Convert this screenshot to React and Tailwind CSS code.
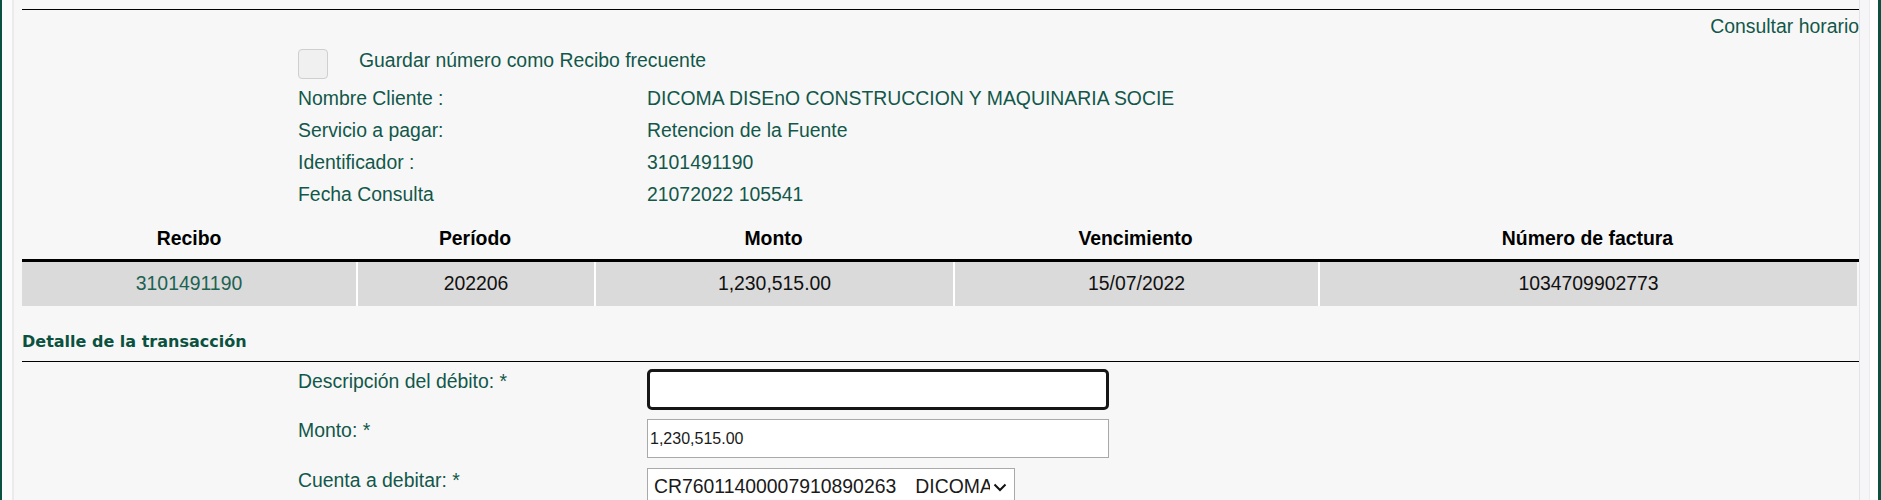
import React from "react";

const green = "text-[#12574a]";

function InfoRow({ label, value }) {
  return (
    <div className="grid grid-cols-[349px_1fr] h-[32px] leading-[32px]">
      <div className={green}>{label}</div>
      <div className={green}>{value}</div>
    </div>
  );
}

export default function App() {
  const cols = "grid grid-cols-[334px_238px_359px_365px_539px]";
  return (
    <div className="h-[500px] w-full overflow-hidden bg-white flex border-l-2 border-r-[3px] border-[#0b5140] font-['Liberation_Sans',Arial,sans-serif] text-[19.4px]">
      <div className="w-[10px] shrink-0 bg-[#fbfbfc]" />
      <div className="w-[1848px] shrink-0 border-l-2 border-l-[#ebebed] border-r border-r-[#e4e4e6] bg-[#f7f7f7] pl-[8px] pt-[9px]">
        <div className="border-t border-black">
          <div className={`text-right pt-[5px] leading-[22px] ${green}`}>Consultar horario</div>

          <div className="mt-[12px] flex items-start pl-[276px]">
            <div className="h-[30px] w-[30px] rounded-[4px] border border-[#cfcfcf] bg-[#f0f0f0]" />
            <div className={`ml-[31px] leading-[22px] ${green}`}>Guardar número como Recibo frecuente</div>
          </div>

          <div className="mt-[3px] pl-[276px]">
            <InfoRow label="Nombre Cliente :" value="DICOMA DISEnO CONSTRUCCION Y MAQUINARIA SOCIE" />
            <InfoRow label="Servicio a pagar:" value="Retencion de la Fuente" />
            <InfoRow label="Identificador :" value="3101491190" />
            <InfoRow label="Fecha Consulta" value="21072022 105541" />
          </div>

          <div className={`${cols} border-b-[3px] border-black font-bold text-black text-center leading-[22px]`}>
            <div className="pt-[17px] pb-[10px]">Recibo</div>
            <div className="pt-[17px] pb-[10px]">Período</div>
            <div className="pt-[17px] pb-[10px]">Monto</div>
            <div className="pt-[17px] pb-[10px]">Vencimiento</div>
            <div className="pt-[17px] pb-[10px]">Número de factura</div>
          </div>

          <div className={`${cols} h-[44px] text-center text-[#111]`}>
            <div className="bg-[#dadada] flex items-center justify-center text-[#1d6253]">3101491190</div>
            <div className="bg-[#dadada] border-l-2 border-white flex items-center justify-center">202206</div>
            <div className="bg-[#dadada] border-l-2 border-white flex items-center justify-center">1,230,515.00</div>
            <div className="bg-[#dadada] border-l-2 border-white flex items-center justify-center">15/07/2022</div>
            <div className="bg-[#dadada] border-l-2 border-white flex items-center justify-center">1034709902773</div>
          </div>

          <div className="pt-[26px] pb-[10px] leading-[19px] border-b border-black font-['DejaVu_Sans',Verdana,sans-serif] font-bold text-[16px] text-[#0b5140]">
            Detalle de la transacción
          </div>

          <div className="pt-[7px] pl-[276px]">
            <div className="grid grid-cols-[349px_1fr] mb-[9px]">
              <div className={`pt-[1px] leading-[22px] ${green}`}>Descripción del débito: *</div>
              <div className="h-[41px] w-[462px] rounded-[5px] border-[3px] border-[#161616] bg-white" />
            </div>
            <div className="grid grid-cols-[349px_1fr] mb-[10px]">
              <div className={`leading-[22px] ${green}`}>Monto: *</div>
              <div className="h-[39px] w-[462px] border border-[#a9a9a9] bg-white flex items-center pl-[2px] text-[16px] text-[#1a1a1a]">
                1,230,515.00
              </div>
            </div>
            <div className="grid grid-cols-[349px_1fr]">
              <div className={`pt-[1px] leading-[22px] ${green}`}>Cuenta a debitar: *</div>
              <div className="h-[38px] w-[368px] border border-[#a9a9a9] bg-white flex items-center pl-[6px] pr-[7px] text-[#1a1a1a]">
                <span className="w-[336px] overflow-hidden whitespace-nowrap flex">
                  <span>CR76011400007910890263</span>
                  <span className="ml-[19px]">DICOMA DISENO</span>
                </span>
                <svg width="14" height="9" viewBox="0 0 14 9" className="ml-[3px] shrink-0">
                  <polyline points="1.5,1.5 7,7 12.5,1.5" fill="none" stroke="#111" strokeWidth="2" />
                </svg>
              </div>
            </div>
          </div>
        </div>
      </div>
      <div className="flex-1 flex">
        <div className="w-[10px] bg-[#f6f6f8] border-r border-[#ebebed]" />
        <div className="flex-1 bg-white" />
      </div>
    </div>
  );
}
